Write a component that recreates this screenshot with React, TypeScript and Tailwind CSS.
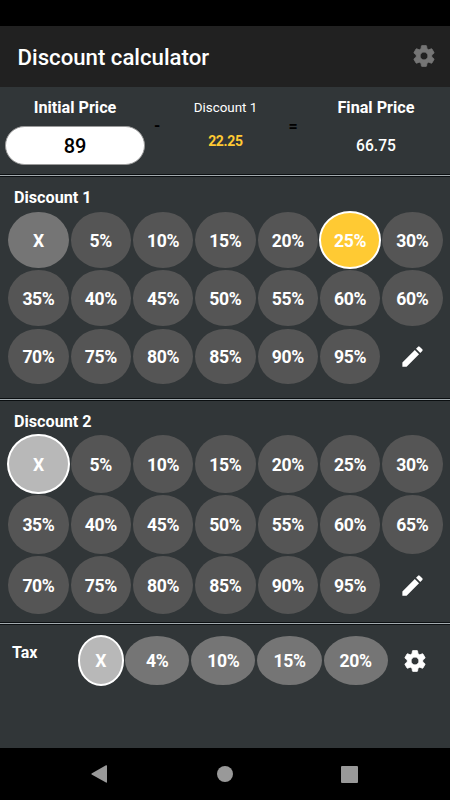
import { type JSX } from 'react';
import clsx from 'clsx';
import { MdEdit } from 'react-icons/md';

type SectionProps = {
  title: string;
  values: string[];
  selected: string;
  gridClass: string;
};

const discount1 = [
  'X', '5%', '10%', '15%', '20%', '25%', '30%',
  '35%', '40%', '45%', '50%', '55%', '60%', '60%',
  '70%', '75%', '80%', '85%', '90%', '95%',
];

const discount2 = [
  'X', '5%', '10%', '15%', '20%', '25%', '30%',
  '35%', '40%', '45%', '50%', '55%', '60%', '65%',
  '70%', '75%', '80%', '85%', '90%', '95%',
];

const taxes = ['X', '4%', '10%', '15%', '20%'];

function Divider(): JSX.Element {
  return <div className="h-[3px] shrink-0 border-y border-[#0b0f11] bg-[#a3abaf]" />;
}

function GearIcon({ className }: { className?: string }): JSX.Element {
  return (
    <svg
      viewBox="0 0 24 24"
      fill="currentColor"
      stroke="currentColor"
      strokeWidth="0.7"
      className={clsx('size-[26px]', className)}
    >
      <path d="M19.14 12.94c.04-.3.06-.61.06-.94 0-.32-.02-.64-.07-.94l2.03-1.58a.49.49 0 0 0 .12-.61l-1.92-3.32a.488.488 0 0 0-.59-.22l-2.39.96c-.5-.38-1.03-.7-1.62-.94l-.36-2.54a.484.484 0 0 0-.48-.41h-3.84c-.24 0-.43.17-.47.41l-.36 2.54c-.59.24-1.13.57-1.62.94l-2.39-.96c-.22-.08-.47 0-.59.22L2.74 8.87c-.12.21-.08.47.12.61l2.03 1.58c-.05.3-.09.63-.09.94s.02.64.07.94l-2.03 1.58a.49.49 0 0 0-.12.61l1.92 3.32c.12.22.37.29.59.22l2.39-.96c.5.38 1.03.7 1.62.94l.36 2.54c.05.24.24.41.48.41h3.84c.24 0 .44-.17.47-.41l.36-2.54c.59-.24 1.13-.56 1.62-.94l2.39.96c.22.08.47 0 .59-.22l1.92-3.32c.12-.22.07-.47-.12-.61l-2.01-1.58zM12 15.6c-1.98 0-3.6-1.62-3.6-3.6s1.62-3.6 3.6-3.6 3.6 1.62 3.6 3.6-1.62 3.6-3.6 3.6z" />
    </svg>
  );
}

function DiscountSection({ title, values, selected, gridClass }: SectionProps): JSX.Element {
  return (
    <section className="flex flex-col">
      <h2 className="mt-[11px] pl-[14px] text-[16.2px] leading-5 font-bold">{title}</h2>
      <div className={clsx('grid grid-cols-7 gap-x-[2px] pr-[7.4px] pl-[8.3px]', gridClass)}>
        {values.map((value, index) => {
          const active = value === selected;
          return (
            <button
              key={index}
              className={clsx(
                'flex items-center justify-center rounded-[50%] text-[17.6px] font-bold tracking-[-0.35px]',
                active && 'outline-2 -outline-offset-1 outline-white',
                active && value === 'X' && 'bg-[#b8b8b8]',
                active && value !== 'X' && 'bg-[#ffca33]',
                !active && value === 'X' && 'bg-[#757575]',
                !active && value !== 'X' && 'bg-[#555555]',
              )}
            >
              <span className="translate-y-px">{value}</span>
            </button>
          );
        })}
        <button className="flex items-center justify-center">
          <MdEdit size={27} />
        </button>
      </div>
    </section>
  );
}

export default function App(): JSX.Element {
  return (
    <div className="flex h-[800px] w-[450px] flex-col overflow-hidden bg-[#313638] font-['Roboto',sans-serif] text-white">
      <div className="h-[26px] shrink-0 bg-black" />
      <header className="flex h-[61px] shrink-0 items-center justify-between bg-[#212121] pr-[13.5px] pl-[17.5px]">
        <h1 className="pt-[3px] text-[22.2px] font-medium">Discount calculator</h1>
        <GearIcon className="mb-px text-[#757575]" />
      </header>

      <div className="flex h-[87px] shrink-0">
        <div className="flex w-[150px] flex-col items-center">
          <div className="mt-[11px] text-[16.2px] leading-5 font-bold">Initial Price</div>
          <div className="mt-[8px] mr-px flex h-[39px] w-[140px] items-center justify-center rounded-[20px] border border-[#9a9a9a] bg-white pt-px pl-px text-[20px] font-medium text-black">
            89
          </div>
        </div>
        <div className="w-[14px] pt-[29px] pl-[4px] text-[16px] leading-5 font-bold text-black">-</div>
        <div className="flex w-[123px] flex-col items-center">
          <div className="mt-[11px] text-[13.4px] leading-5">Discount 1</div>
          <div className="mt-[13px] text-[14px] leading-5 font-bold tracking-[-0.3px] text-[#ffca33]">22.25</div>
        </div>
        <div className="w-[15px] pt-[30px] pl-[1.5px] text-[16px] leading-5 font-bold text-black">=</div>
        <div className="flex w-[148px] flex-col items-center">
          <div className="mt-[11px] text-[16.2px] leading-5 font-bold">Final Price</div>
          <div className="mt-[18px] text-[15.6px] leading-5 font-medium">66.75</div>
        </div>
      </div>

      <Divider />
      <div className="h-[221px] shrink-0">
        <DiscountSection
          title="Discount 1"
          values={discount1}
          selected="25%"
          gridClass="mt-[4px] auto-rows-[55.8px] gap-y-[2.5px]"
        />
      </div>
      <Divider />
      <div className="h-[221px] shrink-0">
        <DiscountSection
          title="Discount 2"
          values={discount2}
          selected="X"
          gridClass="mt-[3px] auto-rows-[58.3px] gap-y-[2.2px]"
        />
      </div>
      <Divider />

      <div className="flex grow">
        <div className="w-[78.5px] pt-[18px] pl-[12px] text-[16px] leading-5 font-bold">Tax</div>
        <div className="mt-[11px] flex h-[49px] gap-[2px]">
          {taxes.map((tax) => (
            <button
              key={tax}
              className={clsx(
                'flex items-center justify-center rounded-[50%] text-[17.6px] font-bold tracking-[-0.35px]',
                tax === 'X' ? 'w-[44.5px] bg-[#b8b8b8] outline-2 -outline-offset-1 outline-white' : 'w-[64.2px] bg-[#757575]',
              )}
            >
              <span className="translate-y-px">{tax}</span>
            </button>
          ))}
        </div>
        <div className="mt-[11px] ml-[14px] flex h-[49px] items-center">
          <GearIcon />
        </div>
      </div>

      <nav className="flex h-[52px] shrink-0 items-center justify-between bg-black pr-[92px] pl-[91px] text-[#999999]">
        <svg width="16" height="18" viewBox="0 0 16 18" fill="currentColor">
          <path d="M15 .3Q16 0 16 1v16q0 1-1 .6L.6 9.6Q0 9 .6 8.4z" />
        </svg>
        <div className="ml-px size-4 rounded-full bg-[#999999]" />
        <div className="size-[17px] rounded-[1px] bg-[#999999]" />
      </nav>
    </div>
  );
}
